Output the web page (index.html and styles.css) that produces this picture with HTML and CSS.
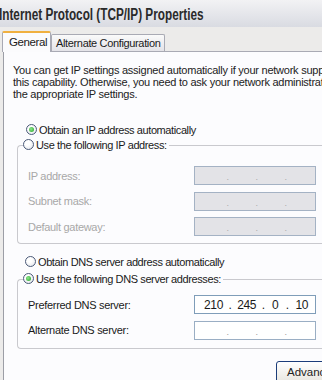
FILE: index.html
```html
<!DOCTYPE html>
<html>
<head>
<meta charset="utf-8">
<link rel="stylesheet" href="styles.css">
</head>
<body>
<div class="window">
  <div class="titlebar"><span class="title">Internet Protocol (TCP/IP) Properties</span></div>
  <div class="tabs">
    <div class="tab active">General</div>
    <div class="tab">Alternate Configuration</div>
  </div>
  <div class="panel">
    <p class="intro">You can get IP settings assigned automatically if your network supports<br>this capability. Otherwise, you need to ask your network administrator for<br>the appropriate IP settings.</p>

    <div class="radio-row first"><span class="radio checked"></span>Obtain an IP address automatically</div>
    <div class="group">
      <div class="legend"><span class="radio"></span>Use the following IP address:</div>
      <div class="field disabled"><span class="label">IP address:</span><span class="ip"><i>.</i><i>.</i><i>.</i></span></div>
      <div class="field disabled"><span class="label">Subnet mask:</span><span class="ip"><i>.</i><i>.</i><i>.</i></span></div>
      <div class="field disabled"><span class="label">Default gateway:</span><span class="ip"><i>.</i><i>.</i><i>.</i></span></div>
    </div>

    <div class="radio-row dns"><span class="radio"></span>Obtain DNS server address automatically</div>
    <div class="group dnsgroup">
      <div class="legend"><span class="radio checked"></span>Use the following DNS server addresses:</div>
      <div class="field"><span class="label">Preferred DNS server:</span><span class="ip filled"><b>210</b><i>.</i><b>245</b><i>.</i><b>0</b><i>.</i><b>10</b></span></div>
      <div class="field"><span class="label">Alternate DNS server:</span><span class="ip white"><i>.</i><i>.</i><i>.</i></span></div>
    </div>

    <div class="buttons"><button class="btn">Advanced...</button></div>
  </div>
</div>
</body>
</html>
```

FILE: styles.css
```css
html, body {
  margin: 0;
  padding: 0;
  width: 322px;
  height: 380px;
  overflow: hidden;
  background: #ecebea;
}
.window {
  font-family: "Liberation Sans", Arial, sans-serif;
  font-size: 11px;
  color: #1a1a1a;
}
.titlebar {
  height: 27px;
  line-height: 30px;
  white-space: nowrap;
  margin-left: -1px;
  background: linear-gradient(#f2f2f4, #d9dbe2);
  overflow: hidden;
}
.title {
  display: inline-block;
  font-weight: bold;
  font-size: 16px;
  color: #2a2a2a;
  transform: scaleX(0.735);
  transform-origin: 0 50%;
}
.tabs {
  display: flex;
  align-items: flex-end;
  padding-left: 2px;
  margin-top: 4px;
  height: 20px;
  position: relative;
  z-index: 1;
}
.tab {
  height: 16px;
  line-height: 16px;
  padding: 0 4px;
  background: linear-gradient(#fafafa, #e4e3e8);
  border: 1px solid #a9aab4;
  border-bottom: none;
  border-radius: 2px 2px 0 0;
  white-space: nowrap;
  letter-spacing: -0.35px;
}
.tab.active {
  height: 19px;
  line-height: 18px;
  padding: 0 6px;
  background: #fbfbfd;
  border-top: 2px solid #f0b040;
  width: 35px;
  margin-bottom: -1px;
  font-size: 11.5px;
  letter-spacing: -0.4px;
}
.panel {
  margin-left: 3px;
  border-left: 1px solid #9c9ea6;
  border-top: 1px solid #a9aab4;
  background: #fcfcfe;
  height: 340px;
  padding: 0 0 0 9px;
  white-space: nowrap;
  overflow: hidden;
}
.intro {
  margin: 12px 0 0 0;
  line-height: 12px;
  letter-spacing: -0.25px;
  color: #222;
}
.radio-row, .legend {
  display: flex;
  align-items: center;
  height: 15px;
  letter-spacing: -0.4px;
}
.radio-row.first {
  margin: 22px 0 0 13px;
}
.radio {
  width: 9px;
  height: 9px;
  border: 1px solid #4b5a78;
  border-radius: 50%;
  background: radial-gradient(circle at 40% 35%, #ffffff 30%, #dcdfe6 100%);
  margin-right: 2px;
  position: relative;
  flex: none;
}
.radio.checked::after {
  content: "";
  position: absolute;
  left: 2px;
  top: 2px;
  width: 5px;
  height: 5px;
  border-radius: 50%;
  background: radial-gradient(circle at 40% 40%, #8ee88e, #21a121);
}
.group {
  margin: 8px 0 0 4px;
  border: 1px solid #c9c9ce;
  border-right: none;
  border-radius: 4px 0 0 4px;
  height: 97px;
  padding-left: 10px;
}
.legend {
  margin: -9px 0 0 -5px;
  background: #fcfcfe;
  width: max-content;
  padding-right: 2px;
}
.field {
  display: flex;
  align-items: center;
  height: 19px;
  margin-top: 6.5px;
  letter-spacing: -0.3px;
}
.legend + .field { margin-top: 14px; }
.dnsgroup .legend + .field { margin-top: 9px; }
.field .label {
  width: 166px;
}
.field.disabled .label {
  color: #a8a8a8;
}
.ip {
  box-sizing: border-box;
  width: 122px;
  height: 19px;
  border: 1px solid #7f9db9;
  background: #e3e3e7;
  display: flex;
  align-items: center;
  justify-content: flex-start;
  padding-left: 18px;
  font-size: 12px;
  color: #1a1a1a;
}
.field.disabled .ip {
  border-color: #a4b2c4;
  color: #aaa;
}
.ip i {
  font-style: normal;
  width: 29px;
  text-align: center;
  font-size: 9px;
  padding-top: 3px;
}
.ip.white {
  background: #fff;
  border-color: #9aaec4;
  color: #999;
}
.ip.filled {
  background: #fff;
  padding-left: 9px;
}
.ip.filled b {
  font-weight: normal;
}
.ip.filled i {
  width: 14px;
  font-size: 12px;
  color: #1a1a1a;
  padding-top: 0;
}
.ip.filled b:nth-of-type(3) { width: 10px; text-align: center; }
.ip.filled b:nth-of-type(4) { width: 15px; text-align: center; }
.dns {
  margin: 10px 0 0 12px;
}
.dnsgroup {
  height: 68px;
  margin-top: 10px;
}
.buttons {
  display: flex;
  justify-content: flex-end;
  margin-top: 12px;
}
.btn {
  font-family: "Liberation Sans", Arial, sans-serif;
  font-size: 11.5px;
  height: 22px;
  width: 60px;
  margin-right: -14px;
  border: 1px solid #1c3d7a;
  border-radius: 3px;
  background: linear-gradient(#ffffff, #e8e6e0);
  color: #222;
  text-align: left;
  padding-left: 10px;
}
```
